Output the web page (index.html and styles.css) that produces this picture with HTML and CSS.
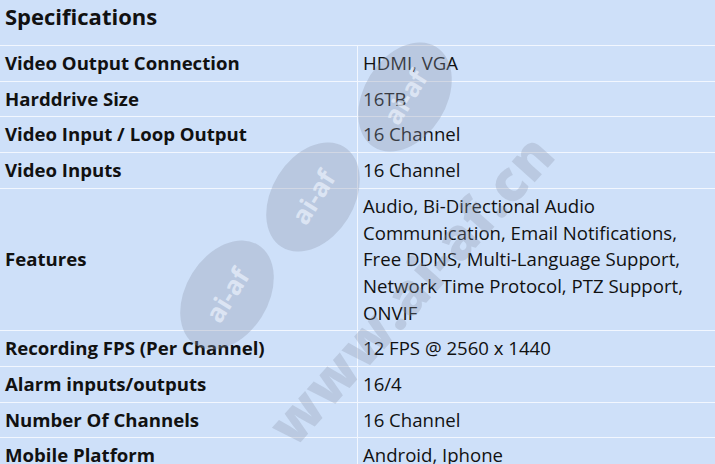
FILE: index.html
```html
<!DOCTYPE html>
<html>
<head>
<meta charset="utf-8">
<link rel="stylesheet" href="styles.css">
</head>
<body>
<div class="page">
  <h2 class="title">Specifications</h2>
  <table class="specs">
    <tr><th>Video Output Connection</th><td>HDMI, VGA</td></tr>
    <tr><th>Harddrive Size</th><td>16TB</td></tr>
    <tr><th>Video Input / Loop Output</th><td>16 Channel</td></tr>
    <tr><th>Video Inputs</th><td>16 Channel</td></tr>
    <tr><th>Features</th><td>Audio, Bi-Directional Audio Communication, Email Notifications, Free DDNS, Multi-Language Support, Network Time Protocol, PTZ Support, ONVIF</td></tr>
    <tr><th>Recording FPS (Per Channel)</th><td>12 FPS @ 2560 x 1440</td></tr>
    <tr><th>Alarm inputs/outputs</th><td>16/4</td></tr>
    <tr><th>Number Of Channels</th><td>16 Channel</td></tr>
    <tr><th>Mobile Platform</th><td>Android, Iphone</td></tr>
  </table>
  <div class="wm" aria-hidden="true">
    <div class="blob b1"><span>ai-af</span></div>
    <div class="blob b2"><span>ai-af</span></div>
    <div class="blob b3"><span>ai-af</span></div>
    <div class="url">www.ai-af.cn</div>
  </div>
</div>
</body>
</html>
```
FILE: styles.css
```css
html, body {
  margin: 0;
  padding: 0;
  background: #cee0f9;
  overflow: hidden;
}
.page {
  position: relative;
  width: 715px;
  height: 464px;
  font-family: "Open Sans", "Noto Sans", sans-serif;
  color: #111;
}
.title {
  margin: 0;
  height: 45px;
  padding: 0 5px;
  font-size: 22px;
  font-weight: 700;
  line-height: 33px;
  border-bottom: 1px solid #f2f7ff;
}
.specs {
  border-collapse: collapse;
  width: 740px;
  font-size: 18.6px;
  table-layout: fixed;
}
.specs th, .specs td {
  text-align: left;
  vertical-align: middle;
  padding: 4px 5px;
  line-height: 26.7px;
  border-bottom: 1px solid #f2f7ff;
}
.specs th {
  width: 347px;
  font-weight: 700;
  border-right: 1px solid #f2f7ff;
}
.specs td {
  font-weight: 400;
  padding-right: 40px;
}
.wm {
  position: absolute;
  inset: 0;
  pointer-events: none;
}
.blob {
  position: absolute;
  width: 82px;
  height: 118px;
  border-radius: 50%;
  background: rgba(140, 150, 170, 0.32);
  transform: rotate(32deg);
  display: flex;
  align-items: center;
  justify-content: center;
}
.blob span {
  transform: rotate(-90deg);
  color: rgba(235, 242, 252, 0.7);
  font-family: "Open Sans", sans-serif;
  font-weight: 700;
  font-size: 26px;
}
.b1 { left: 186px; top: 236px; }
.b2 { left: 272px; top: 138px; }
.b3 { left: 364px; top: 38px; }
.url {
  position: absolute;
  left: 210px;
  top: 250px;
  width: 400px;
  text-align: center;
  transform: rotate(-48deg);
  color: rgba(140, 150, 170, 0.3);
  font-family: "Open Sans", sans-serif;
  font-weight: 800;
  font-size: 56px;
  letter-spacing: 1px;
}
```
